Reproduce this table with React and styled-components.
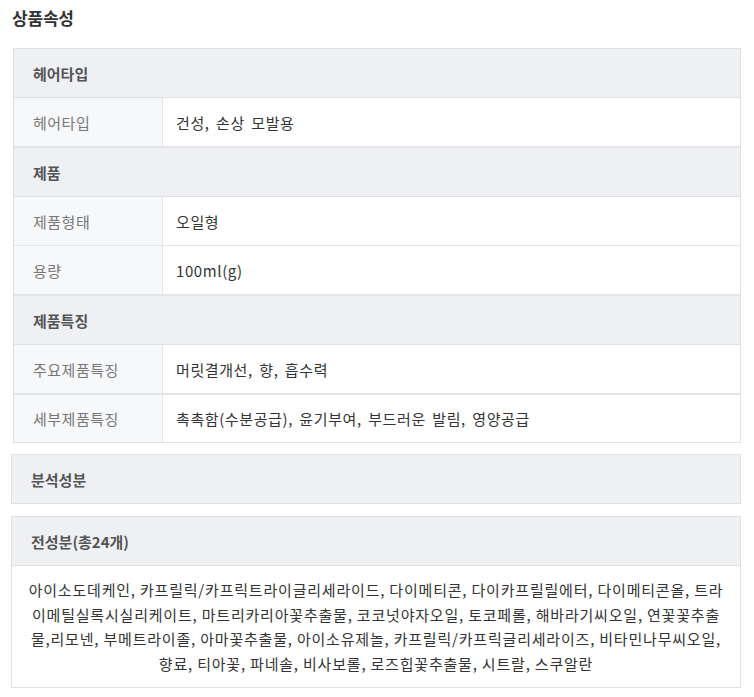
import React from "react";
import styled, { createGlobalStyle } from "styled-components";

const Global = createGlobalStyle`
  html, body { margin: 0; padding: 0; background: #fff; }
  body { font-family: "Noto Sans CJK KR", "Noto Sans", sans-serif; color: #333; }
`;

const Page = styled.div`
  padding: 6px 13px 10px 11px;
  display: flex;
  flex-direction: column;
`;

const Title = styled.h2`
  margin: 0 0 18px 1px;
  font-size: 17px;
  line-height: 24px;
  font-weight: 700;
  color: #333;
  letter-spacing: -0.2px;
`;

const Table = styled.div`
  margin-left: 2px;
  border: 1px solid #dfe1e5;
  display: flex;
  flex-direction: column;
`;

const GroupHead = styled.div`
  height: 48px;
  display: flex;
  align-items: center;
  padding-left: 19px;
  background: #eef0f4;
  font-size: 15px;
  font-weight: 700;
  color: #555;
  border-top: ${(p) => (p.$first ? "none" : "2px solid #e3e5e9")};
  border-bottom: 1px solid #dfe1e5;
`;

const Row = styled.div`
  display: grid;
  grid-template-columns: 149px 1fr;
  height: ${(p) => (p.$thick ? 47 : 48)}px;
  border-top: ${(p) =>
    p.$first ? "none" : p.$thick ? "2px solid #e1e3e7" : "1px solid #e3e5e9"};
`;

const Label = styled.div`
  display: flex;
  align-items: center;
  padding-left: 19px;
  background: #f7f8fa;
  border-right: 1px solid #e3e5e9;
  font-size: 15px;
  color: #777;
  letter-spacing: 0.5px;
`;

const Value = styled.div`
  display: flex;
  align-items: center;
  padding-left: 13px;
  background: #fff;
  font-size: 15px;
  color: #333;
  word-spacing: 2.5px;
  letter-spacing: 0.6px;
`;

const Box = styled.div`
  margin-top: ${(p) => p.$mt}px;
  border: 1px solid #dfe1e5;
  display: flex;
  flex-direction: column;
`;

const BoxHead = styled.div`
  height: 48px;
  display: flex;
  align-items: center;
  padding-left: 19px;
  background: #eef0f4;
  font-size: 15px;
  font-weight: 700;
  color: #555;
`;

const Ingredients = styled.div`
  border-top: 1px solid #dfe1e5;
  padding: 12px 4px 11px;
  display: flex;
  flex-direction: column;
  align-items: center;
  font-size: 15px;
  line-height: 24.5px;
  color: #333;
  letter-spacing: 0.8px;
  white-space: nowrap;
`;

const Line = styled.span`
  display: block;
`;

const groups = [
  { title: "헤어타입", rows: [["헤어타입", "건성, 손상 모발용"]] },
  {
    title: "제품",
    rows: [
      ["제품형태", "오일형"],
      ["용량", "100ml(g)"],
    ],
  },
  {
    title: "제품특징",
    rows: [
      ["주요제품특징", "머릿결개선, 향, 흡수력"],
      ["세부제품특징", "촉촉함(수분공급), 윤기부여, 부드러운 발림, 영양공급"],
    ],
  },
];

const ingredientLines = [
  "아이소도데케인, 카프릴릭/카프릭트라이글리세라이드, 다이메티콘, 다이카프릴릴에터, 다이메티콘올, 트라",
  "이메틸실록시실리케이트, 마트리카리아꽃추출물, 코코넛야자오일, 토코페롤, 해바라기씨오일, 연꽃꽃추출",
  "물,리모넨, 부메트라이졸, 아마꽃추출물, 아이소유제놀, 카프릴릭/카프릭글리세라이즈, 비타민나무씨오일,",
  "향료, 티아꽃, 파네솔, 비사보롤, 로즈힙꽃추출물, 시트랄, 스쿠알란",
];

export default function App() {
  return (
    <>
      <Global />
      <Page>
        <Title>상품속성</Title>
        <Table>
          {groups.map((g, gi) => (
            <React.Fragment key={g.title}>
              <GroupHead $first={gi === 0}>{g.title}</GroupHead>
              {g.rows.map(([k, v], ri) => (
                <Row key={k} $first={ri === 0} $thick={ri > 0 && gi === 2}>
                  <Label>{k}</Label>
                  <Value>{v}</Value>
                </Row>
              ))}
            </React.Fragment>
          ))}
        </Table>
        <Box $mt={11}>
          <BoxHead>분석성분</BoxHead>
        </Box>
        <Box $mt={12}>
          <BoxHead>전성분(총24개)</BoxHead>
          <Ingredients>
            {ingredientLines.map((l) => (
              <Line key={l}>{l}</Line>
            ))}
          </Ingredients>
        </Box>
      </Page>
    </>
  );
}
